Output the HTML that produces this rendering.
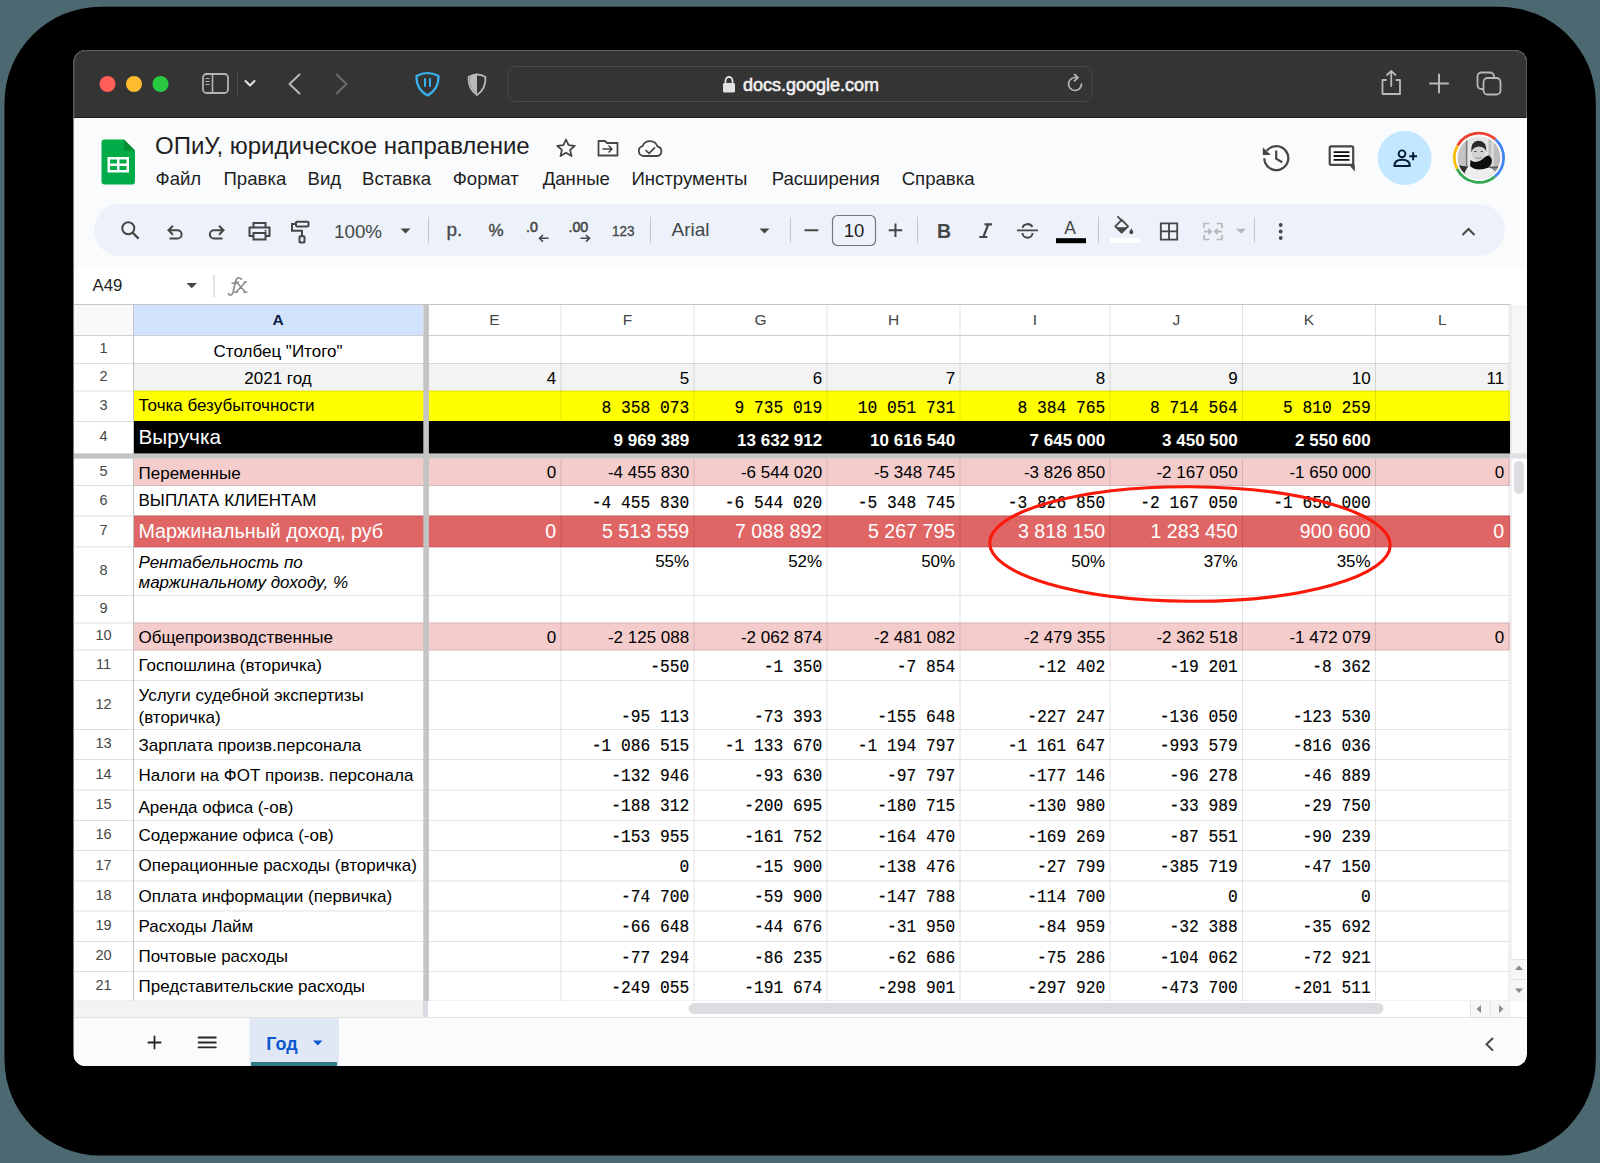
<!DOCTYPE html><html><head><meta charset="utf-8"><title>ОПиУ</title><style>html,body{margin:0;padding:0;background:#4c6871;width:1600px;height:1163px;overflow:hidden}text{white-space:pre}</style></head><body><svg width="1600" height="1163" viewBox="0 0 1600 1163" style="display:block"><defs><clipPath id="win"><rect x="73.5" y="50" width="1453.5" height="1016" rx="12" ry="12"/></clipPath><clipPath id="grid"><rect x="74" y="304" width="1452" height="713"/></clipPath><clipPath id="av"><circle cx="1479" cy="157.8" r="21.3"/></clipPath></defs><rect x="0" y="0" width="1600" height="1163" fill="#4c6871" /><rect x="4.5" y="6.8" width="1591.3" height="1148.7" rx="96" ry="96" fill="#000"/><g clip-path="url(#win)"><rect x="73" y="50" width="1455" height="1016" fill="#f9fbfd" /><rect x="73" y="50" width="1455" height="68" fill="#343434" /><path d="M74 118 V62 A11.5 11.5 0 0 1 85.5 50.5 H1515 A11.5 11.5 0 0 1 1526.5 62 V118" fill="none" stroke="#5e5e5e" stroke-width="1"/><rect x="74" y="117" width="1452" height="1" fill="#1a1a1a" /><circle cx="107.5" cy="84" r="8" fill="#ff5f57"/><circle cx="134" cy="84" r="8" fill="#febc2e"/><circle cx="160.5" cy="84" r="8" fill="#28c840"/><rect x="203" y="74" width="25" height="19" rx="3.5" fill="none" stroke="#b4b4b4" stroke-width="1.8"/><line x1="212.5" y1="74" x2="212.5" y2="93" stroke="#b4b4b4" stroke-width="1.6"/><g stroke="#b4b4b4" stroke-width="1.2"><line x1="205.5" y1="78.5" x2="209.5" y2="78.5"/><line x1="205.5" y1="81.5" x2="209.5" y2="81.5"/><line x1="205.5" y1="84.5" x2="209.5" y2="84.5"/></g><rect x="237" y="72" width="1" height="24" fill="#4c4c4c" /><path d="M245.5 81 L250 85.5 L254.5 81" fill="none" stroke="#e6e6e6" stroke-width="2" stroke-linecap="round" stroke-linejoin="round"/><path d="M299.5 74.5 L289.5 84 L299.5 93.5" fill="none" stroke="#b8b8b8" stroke-width="2" stroke-linecap="round" stroke-linejoin="round"/><path d="M336.5 74.5 L346.5 84 L336.5 93.5" fill="none" stroke="#6c6c6c" stroke-width="2" stroke-linecap="round" stroke-linejoin="round"/><path d="M416.5 76 Q427.5 70 438.5 76 Q439 89 427.5 95.5 Q416 89 416.5 76 Z" fill="none" stroke="#38b2ee" stroke-width="2.2" stroke-linejoin="round"/><g stroke="#38b2ee" stroke-width="2" stroke-linecap="round"><line x1="425" y1="79" x2="425" y2="86"/><line x1="430" y1="79" x2="430" y2="86"/></g><path d="M468.5 77 Q477 72 485.5 77 Q486 89 477 95 Q468 89 468.5 77 Z" fill="none" stroke="#b8b8b8" stroke-width="1.8" stroke-linejoin="round"/><path d="M477 73.5 Q470 76 469.5 78 Q469.5 89 477 94 Z" fill="#b8b8b8"/><rect x="508" y="66.5" width="584" height="35" rx="8" ry="8" fill="#343434" stroke="#4a4a4a" stroke-width="1"/><rect x="723" y="83" width="12" height="9.5" rx="1.5" fill="#e2e2e2"/><path d="M725.5 83.5 V80.5 A3.5 3.5 0 0 1 732.5 80.5 V83.5" fill="none" stroke="#e2e2e2" stroke-width="1.8"/><text x="743" y="91" font-size="18" fill="#f0f0f0" text-anchor="start" font-weight="400" font-style="normal" font-family="'Liberation Sans', sans-serif" stroke="#f0f0f0" stroke-width="0.6">docs.google.com</text><path d="M1081.5 84 A6.5 6.5 0 1 1 1076 77.6" fill="none" stroke="#b8b8b8" stroke-width="1.7" stroke-linecap="round"/><path d="M1074.5 74.5 L1078 77.6 L1074.5 80.8" fill="none" stroke="#b8b8b8" stroke-width="1.7" stroke-linecap="round" stroke-linejoin="round"/><path d="M1386 80 H1382.5 V94 H1400 V80 H1396.5" fill="none" stroke="#b8b8b8" stroke-width="1.8" stroke-linejoin="round" stroke-linecap="round"/><path d="M1391.25 86 V71 M1387 75 L1391.25 71 L1395.5 75" fill="none" stroke="#b8b8b8" stroke-width="1.8" stroke-linecap="round" stroke-linejoin="round"/><path d="M1439 74.5 V92.5 M1430 83.5 H1448" stroke="#b8b8b8" stroke-width="2" stroke-linecap="round"/><rect x="1477.5" y="72.5" width="16.5" height="16.5" rx="4" fill="none" stroke="#b8b8b8" stroke-width="1.8"/><rect x="1483.5" y="78" width="17" height="16.5" rx="4" fill="#343434" stroke="#b8b8b8" stroke-width="1.8"/><path d="M104.5 139.5 H124 L135 150.5 V181.5 A3 3 0 0 1 132.5 184.5 H104.5 A3 3 0 0 1 101.5 181.5 V142.5 A3 3 0 0 1 104.5 139.5 Z" fill="#00ac47"/><path d="M124 139.5 L135 150.5 H124 Z" fill="#089134"/><rect x="107.5" y="157" width="21.5" height="15.5" fill="#fff"/><rect x="110" y="159.5" width="7" height="4" fill="#00ac47"/><rect x="119.5" y="159.5" width="7" height="4" fill="#00ac47"/><rect x="110" y="166" width="7" height="4" fill="#00ac47"/><rect x="119.5" y="166" width="7" height="4" fill="#00ac47"/><text x="155" y="154" font-size="24" fill="#1f1f1f" text-anchor="start" font-weight="400" font-style="normal" font-family="'Liberation Sans', sans-serif" >ОПиУ, юридическое направление</text><path d="M566 139.5 L568.6 145.2 L574.8 145.8 L570.1 149.9 L571.5 156 L566 152.8 L560.5 156 L561.9 149.9 L557.2 145.8 L563.4 145.2 Z" fill="none" stroke="#444746" stroke-width="1.8" stroke-linejoin="round"/><path d="M598.5 141 H605 L607 143 H617.5 V155.5 H598.5 Z" fill="none" stroke="#444746" stroke-width="1.8" stroke-linejoin="round"/><path d="M603 149 H612 M609 146 L612 149 L609 152" fill="none" stroke="#444746" stroke-width="1.6" stroke-linecap="round" stroke-linejoin="round"/><path d="M643.5 156 A5 5 0 0 1 642.5 146.2 A8 8 0 0 1 657.5 146.5 A4.8 4.8 0 0 1 657 156 Z" fill="none" stroke="#444746" stroke-width="1.8" stroke-linejoin="round"/><path d="M646 150.5 L649 153.3 L654.5 147.8" fill="none" stroke="#444746" stroke-width="1.7" stroke-linecap="round" stroke-linejoin="round"/><text x="155.5" y="185" font-size="18.6" fill="#1f1f1f" text-anchor="start" font-weight="400" font-style="normal" font-family="'Liberation Sans', sans-serif" >Файл</text><text x="223.5" y="185" font-size="18.6" fill="#1f1f1f" text-anchor="start" font-weight="400" font-style="normal" font-family="'Liberation Sans', sans-serif" >Правка</text><text x="307.5" y="185" font-size="18.6" fill="#1f1f1f" text-anchor="start" font-weight="400" font-style="normal" font-family="'Liberation Sans', sans-serif" >Вид</text><text x="362" y="185" font-size="18.6" fill="#1f1f1f" text-anchor="start" font-weight="400" font-style="normal" font-family="'Liberation Sans', sans-serif" >Вставка</text><text x="452.7" y="185" font-size="18.6" fill="#1f1f1f" text-anchor="start" font-weight="400" font-style="normal" font-family="'Liberation Sans', sans-serif" >Формат</text><text x="542.7" y="185" font-size="18.6" fill="#1f1f1f" text-anchor="start" font-weight="400" font-style="normal" font-family="'Liberation Sans', sans-serif" >Данные</text><text x="631.4" y="185" font-size="18.6" fill="#1f1f1f" text-anchor="start" font-weight="400" font-style="normal" font-family="'Liberation Sans', sans-serif" >Инструменты</text><text x="771.7" y="185" font-size="18.6" fill="#1f1f1f" text-anchor="start" font-weight="400" font-style="normal" font-family="'Liberation Sans', sans-serif" >Расширения</text><text x="901.7" y="185" font-size="18.6" fill="#1f1f1f" text-anchor="start" font-weight="400" font-style="normal" font-family="'Liberation Sans', sans-serif" >Справка</text><path d="M1264.3 158.3 A12 12 0 1 0 1266.8 150.8" fill="none" stroke="#444746" stroke-width="2.3"/><path d="M1262.8 147.3 V155 H1270.8 Z" fill="#444746"/><path d="M1276.2 150.4 V158.6 L1282.2 162.2" fill="none" stroke="#444746" stroke-width="2.2"/><rect x="1329.7" y="146.3" width="23.5" height="18.5" rx="1.5" fill="none" stroke="#444746" stroke-width="2.2"/><path d="M1348.8 164.5 H1354.8 V171.5 Z" fill="#444746"/><path d="M1334.3 152.1 H1348.8 M1334.3 156 H1348.8 M1334.3 159.9 H1348.8" stroke="#111" stroke-width="1.8" stroke-linecap="round"/><circle cx="1404.6" cy="158" r="27" fill="#c2e7ff"/><circle cx="1402" cy="153.8" r="3.4" fill="none" stroke="#001d35" stroke-width="1.9"/><path d="M1394.4 166 Q1394.4 159.8 1402.1 159.8 Q1409.8 159.8 1409.8 166 Z" fill="none" stroke="#001d35" stroke-width="2" stroke-linejoin="round"/><path d="M1409.3 156.3 H1417 M1413.15 152.2 V160.2" stroke="#001d35" stroke-width="2"/><g fill="none" stroke-width="2.8"><path d="M1457.70 145.50 A24.6 24.6 0 0 1 1495.46 139.52" stroke="#ea4335"/><path d="M1495.46 139.52 A24.6 24.6 0 0 1 1494.81 176.64" stroke="#4285f4"/><path d="M1494.81 176.64 A24.6 24.6 0 0 1 1457.08 168.97" stroke="#34a853"/><path d="M1457.08 168.97 A24.6 24.6 0 0 1 1457.70 145.50" stroke="#fbbc05"/></g><circle cx="1479" cy="157.8" r="23" fill="#fafafa"/><g clip-path="url(#av)"><rect x="1457" y="136" width="44" height="44" fill="#e4e4e4"/><rect x="1457" y="136" width="9" height="44" fill="#c4c4c4"/><rect x="1465.8" y="136" width="1.6" height="30" fill="#7a7a7a"/><rect x="1488.5" y="136" width="12" height="32" fill="#bdbdbd"/><rect x="1491" y="136" width="3" height="32" fill="#d8d8d8"/><rect x="1457" y="166.5" width="44" height="2.2" fill="#5a5a5a"/><rect x="1488" y="168.7" width="13" height="12" fill="#8a8a8a"/><path d="M1457 165 L1469 167 L1470 175 L1457 174 Z" fill="#2e2e2e"/><ellipse cx="1478.3" cy="153.5" rx="6.6" ry="8.3" fill="#d2d2d2"/><path d="M1471.2 152.5 Q1470.5 141 1478.5 140.8 Q1487 141 1486.3 152 Q1485 146.8 1479 146.5 Q1473 146.6 1471.2 152.5 Z" fill="#2b2b2b"/><path d="M1474 151.5 h2.5 M1480.5 151.5 h2.5" stroke="#555" stroke-width="1"/><path d="M1475.5 157.5 Q1478.5 159.5 1481.5 157.5" fill="none" stroke="#777" stroke-width="0.9"/><path d="M1470.5 160 Q1477 165 1485 157 Q1487 155 1489 155.5 Q1493 158.5 1491.5 163.5 Q1488 170 1480 171.5 Q1472.5 171 1470 166 Z" fill="#0e0e0e"/><path d="M1463 181 Q1464 170 1469.5 165.5 Q1476 172.5 1489 167.5 Q1497 170 1498 181 Z" fill="#ededed"/></g><rect x="94" y="204" width="1411" height="52" rx="26" ry="26" fill="#edf2fa"/><circle cx="128.3" cy="228.3" r="6" fill="none" stroke="#444746" stroke-width="2"/><path d="M132.6 232.6 L138.6 238.6" stroke="#444746" stroke-width="2.2"/><path d="M169.5 238.5 H177.5 A4.1 4.1 0 0 0 177.5 230.3 H168.5 M173 225.8 L168.5 230.3 L173 234.8" fill="none" stroke="#444746" stroke-width="2"/><path d="M222.5 238.5 H214 A4.1 4.1 0 0 1 214 230.3 H223.5 M219 225.8 L223.5 230.3 L219 234.8" fill="none" stroke="#444746" stroke-width="2"/><path d="M253.5 227 V223 H265.5 V227" fill="none" stroke="#444746" stroke-width="2"/><path d="M253.5 236 H249.5 V227.5 H269.5 V236 H265.5" fill="none" stroke="#444746" stroke-width="2" stroke-linejoin="round"/><rect x="253.5" y="233" width="12" height="6.5" fill="none" stroke="#444746" stroke-width="2"/><circle cx="265.5" cy="230.8" r="1" fill="#444746"/><rect x="296" y="221.8" width="12.5" height="4.6" rx="0.8" fill="none" stroke="#444746" stroke-width="2"/><path d="M296 224 H292 V230.8 H302 V236" fill="none" stroke="#444746" stroke-width="2"/><rect x="299.5" y="236.3" width="5" height="6.2" rx="0.8" fill="none" stroke="#444746" stroke-width="2"/><text x="334" y="237.7" font-size="18.8" fill="#444746" text-anchor="start" font-weight="400" font-style="normal" font-family="'Liberation Sans', sans-serif" >100%</text><path d="M400.5 228.5 H410.5 L405.5 233.5 Z" fill="#444746"/><rect x="428" y="217" width="1" height="26" fill="#c7c7c7" /><text x="446.5" y="235.5" font-size="19" fill="#444746" text-anchor="start" font-weight="400" font-style="normal" font-family="'Liberation Sans', sans-serif" stroke="#444746" stroke-width="0.3">р.</text><text x="488.5" y="235.5" font-size="17" fill="#444746" text-anchor="start" font-weight="400" font-style="normal" font-family="'Liberation Sans', sans-serif" stroke="#444746" stroke-width="0.4">%</text><text x="526" y="232.3" font-size="14.2" fill="#444746" text-anchor="start" font-weight="400" font-style="normal" font-family="'Liberation Sans', sans-serif" stroke="#444746" stroke-width="0.55">.0</text><path d="M548.5 238.3 H539.5 M543 235 L539.5 238.3 L543 241.6" fill="none" stroke="#444746" stroke-width="1.6"/><text x="568.5" y="232.3" font-size="14.2" fill="#444746" text-anchor="start" font-weight="400" font-style="normal" font-family="'Liberation Sans', sans-serif" stroke="#444746" stroke-width="0.55">.00</text><path d="M580.5 238.3 H589.5 M586 235 L589.5 238.3 L586 241.6" fill="none" stroke="#444746" stroke-width="1.6"/><text x="612" y="235.5" font-size="15.2" fill="#444746" text-anchor="start" font-weight="400" font-style="normal" font-family="'Liberation Sans', sans-serif" textLength="22.5" lengthAdjust="spacingAndGlyphs" stroke="#444746" stroke-width="0.35">123</text><rect x="650" y="217" width="1" height="26" fill="#c7c7c7" /><text x="671.5" y="236.4" font-size="19" fill="#444746" text-anchor="start" font-weight="400" font-style="normal" font-family="'Liberation Sans', sans-serif" >Arial</text><path d="M759.5 228.5 H769.5 L764.5 233.5 Z" fill="#444746"/><rect x="790" y="217" width="1" height="26" fill="#c7c7c7" /><path d="M804.5 230.3 H818.3" stroke="#444746" stroke-width="2"/><rect x="832.5" y="215.5" width="43" height="30" rx="5" fill="none" stroke="#747775" stroke-width="1.2"/><text x="854" y="236.5" font-size="18.5" fill="#1f1f1f" text-anchor="middle" font-weight="400" font-style="normal" font-family="'Liberation Sans', sans-serif" >10</text><path d="M888.7 230.3 H902.2 M895.45 223.5 V237" stroke="#444746" stroke-width="2"/><rect x="917" y="217" width="1" height="26" fill="#c7c7c7" /><text x="937" y="238" font-size="19.5" fill="#444746" text-anchor="start" font-weight="700" font-style="normal" font-family="'Liberation Sans', sans-serif" >B</text><path d="M984.5 224.3 H992 M979.3 237 H987.3 M988.3 224.3 L983.3 237" fill="none" stroke="#444746" stroke-width="2.2"/><path d="M1017 230.3 H1038" stroke="#444746" stroke-width="1.8"/><path d="M1022.6 227.8 A5 4.2 0 0 1 1032.3 227" fill="none" stroke="#444746" stroke-width="2"/><path d="M1022.5 233 A5 4.8 0 0 0 1032.5 233" fill="none" stroke="#444746" stroke-width="2"/><text x="1070.2" y="234" font-size="17.5" fill="#444746" text-anchor="middle" font-weight="400" font-style="normal" font-family="'Liberation Sans', sans-serif" >A</text><rect x="1056" y="238.2" width="30" height="5" fill="#000" /><rect x="1098" y="217" width="1" height="26" fill="#c7c7c7" /><path d="M1118 216.8 L1122.3 221.1" stroke="#444746" stroke-width="1.8" stroke-linecap="round"/><path d="M1121.7 219.9 L1128.1 226.3 L1121.7 232.7 L1115.3 226.3 Z" fill="none" stroke="#444746" stroke-width="1.8" stroke-linejoin="round"/><path d="M1115.6 227.2 H1127.8 L1121.7 233 Z" fill="#444746"/><path d="M1131.3 228.3 L1129.5 231.4 A1.95 1.95 0 1 0 1133.1 231.4 Z" fill="#444746"/><rect x="1110" y="238" width="30" height="5" fill="#ffffff" /><path d="M1160.8 223.3 H1177.2 V239.6 H1160.8 Z M1169 223.3 V239.6 M1160.8 231.45 H1177.2" fill="none" stroke="#444746" stroke-width="1.8"/><path d="M1204 228 V223.5 H1209.5 M1204 235 V239.5 H1209.5 M1222 228 V223.5 H1216.5 M1222 235 V239.5 H1216.5" fill="none" stroke="#b8b9b9" stroke-width="1.7"/><path d="M1204 231.5 H1211 M1208.5 229 L1211 231.5 L1208.5 234 M1222 231.5 H1215 M1217.5 229 L1215 231.5 L1217.5 234" fill="none" stroke="#b8b9b9" stroke-width="1.8"/><path d="M1236 228.8 H1246 L1241 233.8 Z" fill="#b8b9b9"/><rect x="1254" y="217" width="1" height="26" fill="#c7c7c7" /><circle cx="1280.7" cy="225" r="1.9" fill="#444746"/><circle cx="1280.7" cy="231.5" r="1.9" fill="#444746"/><circle cx="1280.7" cy="238" r="1.9" fill="#444746"/><path d="M1462.5 235 L1468.5 229 L1474.5 235" fill="none" stroke="#444746" stroke-width="2"/><rect x="74" y="267" width="1452" height="37" fill="#ffffff" /><text x="92.5" y="290.5" font-size="16.8" fill="#1f1f1f" text-anchor="start" font-weight="400" font-style="normal" font-family="'Liberation Sans', sans-serif" >A49</text><path d="M186.5 283 H197 L191.75 288.3 Z" fill="#444746"/><rect x="213.5" y="275" width="1" height="22" fill="#c7c7c7" /><path d="M241.5 279.2 Q240 277.3 237.8 278 Q236 278.8 235.5 281.5 L233 292.5 Q232.3 295.2 230 295 Q228.8 294.8 228.5 293.5" fill="none" stroke="#8e8e8e" stroke-width="1.7" stroke-linecap="round"/><path d="M231.5 283.3 H238.8" stroke="#8e8e8e" stroke-width="1.6"/><path d="M236.5 282 L245.5 292.3 M245.5 282 L236 292.3 M234.5 282 H238.5 M243.5 282 H247 M234 292.3 H238 M243.5 292.3 H247.3" fill="none" stroke="#8e8e8e" stroke-width="1.6"/><g clip-path="url(#grid)"><rect x="74" y="304" width="1436" height="697.5" fill="#ffffff" /><rect x="133.5" y="363" width="1377" height="28.600000000000023" fill="#f3f3f3" /><rect x="133.5" y="390.6" width="1377" height="31.399999999999977" fill="#ffff00" /><rect x="133.5" y="421" width="1377" height="33" fill="#000000" /><rect x="133.5" y="458.6" width="1377" height="27.399999999999977" fill="#f4cccc" /><rect x="133.5" y="515.5" width="1377" height="31.799999999999955" fill="#e06666" /><rect x="133.5" y="622.5" width="1377" height="28.0" fill="#f4cccc" /><rect x="74" y="304" width="59.5" height="31.3" fill="#f8f9fa" /><rect x="133.5" y="304.5" width="289.5" height="30.8" fill="#d3e3fd" /><rect x="133.5" y="363" width="1375.5" height="1" fill="rgba(0,0,0,0.115)"/><rect x="74" y="363" width="59.5" height="1" fill="rgba(0,0,0,0.13)"/><rect x="133.5" y="390.6" width="1375.5" height="1" fill="rgba(0,0,0,0.115)"/><rect x="74" y="390.6" width="59.5" height="1" fill="rgba(0,0,0,0.13)"/><rect x="133.5" y="421" width="1375.5" height="1" fill="rgba(0,0,0,0.115)"/><rect x="74" y="421" width="59.5" height="1" fill="rgba(0,0,0,0.13)"/><rect x="133.5" y="485" width="1375.5" height="1" fill="rgba(0,0,0,0.115)"/><rect x="74" y="485" width="59.5" height="1" fill="rgba(0,0,0,0.13)"/><rect x="133.5" y="515.5" width="1375.5" height="1" fill="rgba(0,0,0,0.115)"/><rect x="74" y="515.5" width="59.5" height="1" fill="rgba(0,0,0,0.13)"/><rect x="133.5" y="546.3" width="1375.5" height="1" fill="rgba(0,0,0,0.115)"/><rect x="74" y="546.3" width="59.5" height="1" fill="rgba(0,0,0,0.13)"/><rect x="133.5" y="595" width="1375.5" height="1" fill="rgba(0,0,0,0.115)"/><rect x="74" y="595" width="59.5" height="1" fill="rgba(0,0,0,0.13)"/><rect x="133.5" y="622.5" width="1375.5" height="1" fill="rgba(0,0,0,0.115)"/><rect x="74" y="622.5" width="59.5" height="1" fill="rgba(0,0,0,0.13)"/><rect x="133.5" y="649.5" width="1375.5" height="1" fill="rgba(0,0,0,0.115)"/><rect x="74" y="649.5" width="59.5" height="1" fill="rgba(0,0,0,0.13)"/><rect x="133.5" y="680" width="1375.5" height="1" fill="rgba(0,0,0,0.115)"/><rect x="74" y="680" width="59.5" height="1" fill="rgba(0,0,0,0.13)"/><rect x="133.5" y="729" width="1375.5" height="1" fill="rgba(0,0,0,0.115)"/><rect x="74" y="729" width="59.5" height="1" fill="rgba(0,0,0,0.13)"/><rect x="133.5" y="759" width="1375.5" height="1" fill="rgba(0,0,0,0.115)"/><rect x="74" y="759" width="59.5" height="1" fill="rgba(0,0,0,0.13)"/><rect x="133.5" y="789.5" width="1375.5" height="1" fill="rgba(0,0,0,0.115)"/><rect x="74" y="789.5" width="59.5" height="1" fill="rgba(0,0,0,0.13)"/><rect x="133.5" y="820" width="1375.5" height="1" fill="rgba(0,0,0,0.115)"/><rect x="74" y="820" width="59.5" height="1" fill="rgba(0,0,0,0.13)"/><rect x="133.5" y="850" width="1375.5" height="1" fill="rgba(0,0,0,0.115)"/><rect x="74" y="850" width="59.5" height="1" fill="rgba(0,0,0,0.13)"/><rect x="133.5" y="880.5" width="1375.5" height="1" fill="rgba(0,0,0,0.115)"/><rect x="74" y="880.5" width="59.5" height="1" fill="rgba(0,0,0,0.13)"/><rect x="133.5" y="910.5" width="1375.5" height="1" fill="rgba(0,0,0,0.115)"/><rect x="74" y="910.5" width="59.5" height="1" fill="rgba(0,0,0,0.13)"/><rect x="133.5" y="941" width="1375.5" height="1" fill="rgba(0,0,0,0.115)"/><rect x="74" y="941" width="59.5" height="1" fill="rgba(0,0,0,0.13)"/><rect x="133.5" y="971" width="1375.5" height="1" fill="rgba(0,0,0,0.115)"/><rect x="74" y="971" width="59.5" height="1" fill="rgba(0,0,0,0.13)"/><rect x="133.5" y="1000.5" width="1375.5" height="1" fill="rgba(0,0,0,0.115)"/><rect x="74" y="1000.5" width="59.5" height="1" fill="rgba(0,0,0,0.13)"/><rect x="560.5" y="304" width="1" height="697.5" fill="rgba(0,0,0,0.115)"/><rect x="693.5" y="304" width="1" height="697.5" fill="rgba(0,0,0,0.115)"/><rect x="826.5" y="304" width="1" height="697.5" fill="rgba(0,0,0,0.115)"/><rect x="959.5" y="304" width="1" height="697.5" fill="rgba(0,0,0,0.115)"/><rect x="1109.5" y="304" width="1" height="697.5" fill="rgba(0,0,0,0.115)"/><rect x="1242.0" y="304" width="1" height="697.5" fill="rgba(0,0,0,0.115)"/><rect x="1375.0" y="304" width="1" height="697.5" fill="rgba(0,0,0,0.115)"/><rect x="1508.5" y="304" width="1" height="697.5" fill="rgba(0,0,0,0.115)"/><rect x="74" y="304" width="1452" height="1" fill="#c6c6c6" /><rect x="74" y="335" width="1436" height="1" fill="#cfcfcf" /><rect x="133" y="304" width="1" height="697.5" fill="#c4c4c4" /><rect x="423.3" y="304" width="5.6" height="697.5" fill="#c4c4c4" /><rect x="74" y="453.4" width="1436" height="5.2" fill="#c4c4c4" /><text x="278" y="325" font-size="15.5" fill="#0b1f44" text-anchor="middle" font-weight="700" font-style="normal" font-family="'Liberation Sans', sans-serif" >A</text><text x="494.5" y="325" font-size="15.5" fill="#444746" text-anchor="middle" font-weight="400" font-style="normal" font-family="'Liberation Sans', sans-serif" >E</text><text x="627.5" y="325" font-size="15.5" fill="#444746" text-anchor="middle" font-weight="400" font-style="normal" font-family="'Liberation Sans', sans-serif" >F</text><text x="760.5" y="325" font-size="15.5" fill="#444746" text-anchor="middle" font-weight="400" font-style="normal" font-family="'Liberation Sans', sans-serif" >G</text><text x="893.5" y="325" font-size="15.5" fill="#444746" text-anchor="middle" font-weight="400" font-style="normal" font-family="'Liberation Sans', sans-serif" >H</text><text x="1035.0" y="325" font-size="15.5" fill="#444746" text-anchor="middle" font-weight="400" font-style="normal" font-family="'Liberation Sans', sans-serif" >I</text><text x="1176.25" y="325" font-size="15.5" fill="#444746" text-anchor="middle" font-weight="400" font-style="normal" font-family="'Liberation Sans', sans-serif" >J</text><text x="1309.0" y="325" font-size="15.5" fill="#444746" text-anchor="middle" font-weight="400" font-style="normal" font-family="'Liberation Sans', sans-serif" >K</text><text x="1442.25" y="325" font-size="15.5" fill="#444746" text-anchor="middle" font-weight="400" font-style="normal" font-family="'Liberation Sans', sans-serif" >L</text><text x="103.5" y="353.3" font-size="14.5" fill="#444746" text-anchor="middle" font-weight="400" font-style="normal" font-family="'Liberation Sans', sans-serif" >1</text><text x="103.5" y="381.1" font-size="14.5" fill="#444746" text-anchor="middle" font-weight="400" font-style="normal" font-family="'Liberation Sans', sans-serif" >2</text><text x="103.5" y="410.1" font-size="14.5" fill="#444746" text-anchor="middle" font-weight="400" font-style="normal" font-family="'Liberation Sans', sans-serif" >3</text><text x="103.5" y="441.3" font-size="14.5" fill="#444746" text-anchor="middle" font-weight="400" font-style="normal" font-family="'Liberation Sans', sans-serif" >4</text><text x="103.5" y="476.1" font-size="14.5" fill="#444746" text-anchor="middle" font-weight="400" font-style="normal" font-family="'Liberation Sans', sans-serif" >5</text><text x="103.5" y="504.55" font-size="14.5" fill="#444746" text-anchor="middle" font-weight="400" font-style="normal" font-family="'Liberation Sans', sans-serif" >6</text><text x="103.5" y="535.1999999999999" font-size="14.5" fill="#444746" text-anchor="middle" font-weight="400" font-style="normal" font-family="'Liberation Sans', sans-serif" >7</text><text x="103.5" y="574.9499999999999" font-size="14.5" fill="#444746" text-anchor="middle" font-weight="400" font-style="normal" font-family="'Liberation Sans', sans-serif" >8</text><text x="103.5" y="613.05" font-size="14.5" fill="#444746" text-anchor="middle" font-weight="400" font-style="normal" font-family="'Liberation Sans', sans-serif" >9</text><text x="103.5" y="640.3" font-size="14.5" fill="#444746" text-anchor="middle" font-weight="400" font-style="normal" font-family="'Liberation Sans', sans-serif" >10</text><text x="103.5" y="669.05" font-size="14.5" fill="#444746" text-anchor="middle" font-weight="400" font-style="normal" font-family="'Liberation Sans', sans-serif" >11</text><text x="103.5" y="708.8" font-size="14.5" fill="#444746" text-anchor="middle" font-weight="400" font-style="normal" font-family="'Liberation Sans', sans-serif" >12</text><text x="103.5" y="748.3" font-size="14.5" fill="#444746" text-anchor="middle" font-weight="400" font-style="normal" font-family="'Liberation Sans', sans-serif" >13</text><text x="103.5" y="778.55" font-size="14.5" fill="#444746" text-anchor="middle" font-weight="400" font-style="normal" font-family="'Liberation Sans', sans-serif" >14</text><text x="103.5" y="809.05" font-size="14.5" fill="#444746" text-anchor="middle" font-weight="400" font-style="normal" font-family="'Liberation Sans', sans-serif" >15</text><text x="103.5" y="839.3" font-size="14.5" fill="#444746" text-anchor="middle" font-weight="400" font-style="normal" font-family="'Liberation Sans', sans-serif" >16</text><text x="103.5" y="869.55" font-size="14.5" fill="#444746" text-anchor="middle" font-weight="400" font-style="normal" font-family="'Liberation Sans', sans-serif" >17</text><text x="103.5" y="899.8" font-size="14.5" fill="#444746" text-anchor="middle" font-weight="400" font-style="normal" font-family="'Liberation Sans', sans-serif" >18</text><text x="103.5" y="930.05" font-size="14.5" fill="#444746" text-anchor="middle" font-weight="400" font-style="normal" font-family="'Liberation Sans', sans-serif" >19</text><text x="103.5" y="960.3" font-size="14.5" fill="#444746" text-anchor="middle" font-weight="400" font-style="normal" font-family="'Liberation Sans', sans-serif" >20</text><text x="103.5" y="990.05" font-size="14.5" fill="#444746" text-anchor="middle" font-weight="400" font-style="normal" font-family="'Liberation Sans', sans-serif" >21</text><text x="278" y="356.7" font-size="17" fill="#000" text-anchor="middle" font-weight="400" font-style="normal" font-family="'Liberation Sans', sans-serif" >Столбец "Итого"</text><text x="278" y="384.3" font-size="17" fill="#000" text-anchor="middle" font-weight="400" font-style="normal" font-family="'Liberation Sans', sans-serif" >2021 год</text><text x="138.5" y="411" font-size="17" fill="#000" text-anchor="start" font-weight="400" font-style="normal" font-family="'Liberation Sans', sans-serif" >Точка безубыточности</text><text x="138.5" y="444.2" font-size="20.8" fill="#fff" text-anchor="start" font-weight="400" font-style="normal" font-family="'Liberation Sans', sans-serif" >Выручка</text><text x="138.5" y="479" font-size="17" fill="#000" text-anchor="start" font-weight="400" font-style="normal" font-family="'Liberation Sans', sans-serif" >Переменные</text><text x="138.5" y="506.2" font-size="17" fill="#000" text-anchor="start" font-weight="400" font-style="normal" font-family="'Liberation Sans', sans-serif" >ВЫПЛАТА КЛИЕНТАМ</text><text x="138.5" y="537.6" font-size="19.7" fill="#fff" text-anchor="start" font-weight="400" font-style="normal" font-family="'Liberation Sans', sans-serif" >Маржинальный доход, руб</text><text x="138.5" y="567.5" font-size="17" fill="#000" text-anchor="start" font-weight="400" font-style="italic" font-family="'Liberation Sans', sans-serif" >Рентабельность по</text><text x="138.5" y="588.2" font-size="17" fill="#000" text-anchor="start" font-weight="400" font-style="italic" font-family="'Liberation Sans', sans-serif" >маржинальному доходу, %</text><text x="138.5" y="643" font-size="17" fill="#000" text-anchor="start" font-weight="400" font-style="normal" font-family="'Liberation Sans', sans-serif" >Общепроизводственные</text><text x="138.5" y="670.7" font-size="17" fill="#000" text-anchor="start" font-weight="400" font-style="normal" font-family="'Liberation Sans', sans-serif" >Госпошлина (вторичка)</text><text x="138.5" y="701.1" font-size="17" fill="#000" text-anchor="start" font-weight="400" font-style="normal" font-family="'Liberation Sans', sans-serif" >Услуги судебной экспертизы</text><text x="138.5" y="722.6" font-size="17" fill="#000" text-anchor="start" font-weight="400" font-style="normal" font-family="'Liberation Sans', sans-serif" >(вторичка)</text><text x="138.5" y="750.6" font-size="17" fill="#000" text-anchor="start" font-weight="400" font-style="normal" font-family="'Liberation Sans', sans-serif" >Зарплата произв.персонала</text><text x="138.5" y="780.6" font-size="17" fill="#000" text-anchor="start" font-weight="400" font-style="normal" font-family="'Liberation Sans', sans-serif" >Налоги на ФОТ произв. персонала</text><text x="138.5" y="813.4" font-size="17" fill="#000" text-anchor="start" font-weight="400" font-style="normal" font-family="'Liberation Sans', sans-serif" >Аренда офиса (-ов)</text><text x="138.5" y="841.1" font-size="17" fill="#000" text-anchor="start" font-weight="400" font-style="normal" font-family="'Liberation Sans', sans-serif" >Содержание офиса (-ов)</text><text x="138.5" y="871.1" font-size="17" fill="#000" text-anchor="start" font-weight="400" font-style="normal" font-family="'Liberation Sans', sans-serif" >Операционные расходы (вторичка)</text><text x="138.5" y="901.6" font-size="17" fill="#000" text-anchor="start" font-weight="400" font-style="normal" font-family="'Liberation Sans', sans-serif" >Оплата информации (первичка)</text><text x="138.5" y="931.6" font-size="17" fill="#000" text-anchor="start" font-weight="400" font-style="normal" font-family="'Liberation Sans', sans-serif" >Расходы Лайм</text><text x="138.5" y="962.1" font-size="17" fill="#000" text-anchor="start" font-weight="400" font-style="normal" font-family="'Liberation Sans', sans-serif" >Почтовые расходы</text><text x="138.5" y="992.1" font-size="17" fill="#000" text-anchor="start" font-weight="400" font-style="normal" font-family="'Liberation Sans', sans-serif" >Представительские расходы</text><text x="556.2" y="384" font-size="17" fill="#000" text-anchor="end" font-weight="400" font-style="normal" font-family="'Liberation Sans', sans-serif" >4</text><text x="689.2" y="384" font-size="17" fill="#000" text-anchor="end" font-weight="400" font-style="normal" font-family="'Liberation Sans', sans-serif" >5</text><text x="822.2" y="384" font-size="17" fill="#000" text-anchor="end" font-weight="400" font-style="normal" font-family="'Liberation Sans', sans-serif" >6</text><text x="955.2" y="384" font-size="17" fill="#000" text-anchor="end" font-weight="400" font-style="normal" font-family="'Liberation Sans', sans-serif" >7</text><text x="1105.2" y="384" font-size="17" fill="#000" text-anchor="end" font-weight="400" font-style="normal" font-family="'Liberation Sans', sans-serif" >8</text><text x="1237.7" y="384" font-size="17" fill="#000" text-anchor="end" font-weight="400" font-style="normal" font-family="'Liberation Sans', sans-serif" >9</text><text x="1370.7" y="384" font-size="17" fill="#000" text-anchor="end" font-weight="400" font-style="normal" font-family="'Liberation Sans', sans-serif" >10</text><text x="1504.2" y="384" font-size="17" fill="#000" text-anchor="end" font-weight="400" font-style="normal" font-family="'Liberation Sans', sans-serif" >11</text><text x="689.2" y="412.8" font-size="18.4" fill="#000" stroke="#000" stroke-width="0.15" text-anchor="end" font-family="'Liberation Mono', monospace" textLength="87.66" lengthAdjust="spacingAndGlyphs">8 358 073</text><text x="822.2" y="412.8" font-size="18.4" fill="#000" stroke="#000" stroke-width="0.15" text-anchor="end" font-family="'Liberation Mono', monospace" textLength="87.66" lengthAdjust="spacingAndGlyphs">9 735 019</text><text x="955.2" y="412.8" font-size="18.4" fill="#000" stroke="#000" stroke-width="0.15" text-anchor="end" font-family="'Liberation Mono', monospace" textLength="97.40" lengthAdjust="spacingAndGlyphs">10 051 731</text><text x="1105.2" y="412.8" font-size="18.4" fill="#000" stroke="#000" stroke-width="0.15" text-anchor="end" font-family="'Liberation Mono', monospace" textLength="87.66" lengthAdjust="spacingAndGlyphs">8 384 765</text><text x="1237.7" y="412.8" font-size="18.4" fill="#000" stroke="#000" stroke-width="0.15" text-anchor="end" font-family="'Liberation Mono', monospace" textLength="87.66" lengthAdjust="spacingAndGlyphs">8 714 564</text><text x="1370.7" y="412.8" font-size="18.4" fill="#000" stroke="#000" stroke-width="0.15" text-anchor="end" font-family="'Liberation Mono', monospace" textLength="87.66" lengthAdjust="spacingAndGlyphs">5 810 259</text><text x="689.2" y="445.9" font-size="17" fill="#fff" text-anchor="end" font-weight="700" font-style="normal" font-family="'Liberation Sans', sans-serif" >9 969 389</text><text x="822.2" y="445.9" font-size="17" fill="#fff" text-anchor="end" font-weight="700" font-style="normal" font-family="'Liberation Sans', sans-serif" >13 632 912</text><text x="955.2" y="445.9" font-size="17" fill="#fff" text-anchor="end" font-weight="700" font-style="normal" font-family="'Liberation Sans', sans-serif" >10 616 540</text><text x="1105.2" y="445.9" font-size="17" fill="#fff" text-anchor="end" font-weight="700" font-style="normal" font-family="'Liberation Sans', sans-serif" >7 645 000</text><text x="1237.7" y="445.9" font-size="17" fill="#fff" text-anchor="end" font-weight="700" font-style="normal" font-family="'Liberation Sans', sans-serif" >3 450 500</text><text x="1370.7" y="445.9" font-size="17" fill="#fff" text-anchor="end" font-weight="700" font-style="normal" font-family="'Liberation Sans', sans-serif" >2 550 600</text><text x="556.2" y="478.4" font-size="17" fill="#000" text-anchor="end" font-weight="400" font-style="normal" font-family="'Liberation Sans', sans-serif" >0</text><text x="689.2" y="478.4" font-size="17" fill="#000" text-anchor="end" font-weight="400" font-style="normal" font-family="'Liberation Sans', sans-serif" >-4 455 830</text><text x="822.2" y="478.4" font-size="17" fill="#000" text-anchor="end" font-weight="400" font-style="normal" font-family="'Liberation Sans', sans-serif" >-6 544 020</text><text x="955.2" y="478.4" font-size="17" fill="#000" text-anchor="end" font-weight="400" font-style="normal" font-family="'Liberation Sans', sans-serif" >-5 348 745</text><text x="1105.2" y="478.4" font-size="17" fill="#000" text-anchor="end" font-weight="400" font-style="normal" font-family="'Liberation Sans', sans-serif" >-3 826 850</text><text x="1237.7" y="478.4" font-size="17" fill="#000" text-anchor="end" font-weight="400" font-style="normal" font-family="'Liberation Sans', sans-serif" >-2 167 050</text><text x="1370.7" y="478.4" font-size="17" fill="#000" text-anchor="end" font-weight="400" font-style="normal" font-family="'Liberation Sans', sans-serif" >-1 650 000</text><text x="1504.2" y="478.4" font-size="17" fill="#000" text-anchor="end" font-weight="400" font-style="normal" font-family="'Liberation Sans', sans-serif" >0</text><text x="689.2" y="507.5" font-size="18.4" fill="#000" stroke="#000" stroke-width="0.15" text-anchor="end" font-family="'Liberation Mono', monospace" textLength="97.40" lengthAdjust="spacingAndGlyphs">-4 455 830</text><text x="822.2" y="507.5" font-size="18.4" fill="#000" stroke="#000" stroke-width="0.15" text-anchor="end" font-family="'Liberation Mono', monospace" textLength="97.40" lengthAdjust="spacingAndGlyphs">-6 544 020</text><text x="955.2" y="507.5" font-size="18.4" fill="#000" stroke="#000" stroke-width="0.15" text-anchor="end" font-family="'Liberation Mono', monospace" textLength="97.40" lengthAdjust="spacingAndGlyphs">-5 348 745</text><text x="1105.2" y="507.5" font-size="18.4" fill="#000" stroke="#000" stroke-width="0.15" text-anchor="end" font-family="'Liberation Mono', monospace" textLength="97.40" lengthAdjust="spacingAndGlyphs">-3 826 850</text><text x="1237.7" y="507.5" font-size="18.4" fill="#000" stroke="#000" stroke-width="0.15" text-anchor="end" font-family="'Liberation Mono', monospace" textLength="97.40" lengthAdjust="spacingAndGlyphs">-2 167 050</text><text x="1370.7" y="507.5" font-size="18.4" fill="#000" stroke="#000" stroke-width="0.15" text-anchor="end" font-family="'Liberation Mono', monospace" textLength="97.40" lengthAdjust="spacingAndGlyphs">-1 650 000</text><text x="556.2" y="537.6" font-size="19.6" fill="#fff" text-anchor="end" font-weight="400" font-style="normal" font-family="'Liberation Sans', sans-serif" >0</text><text x="689.2" y="537.6" font-size="19.6" fill="#fff" text-anchor="end" font-weight="400" font-style="normal" font-family="'Liberation Sans', sans-serif" >5 513 559</text><text x="822.2" y="537.6" font-size="19.6" fill="#fff" text-anchor="end" font-weight="400" font-style="normal" font-family="'Liberation Sans', sans-serif" >7 088 892</text><text x="955.2" y="537.6" font-size="19.6" fill="#fff" text-anchor="end" font-weight="400" font-style="normal" font-family="'Liberation Sans', sans-serif" >5 267 795</text><text x="1105.2" y="537.6" font-size="19.6" fill="#fff" text-anchor="end" font-weight="400" font-style="normal" font-family="'Liberation Sans', sans-serif" >3 818 150</text><text x="1237.7" y="537.6" font-size="19.6" fill="#fff" text-anchor="end" font-weight="400" font-style="normal" font-family="'Liberation Sans', sans-serif" >1 283 450</text><text x="1370.7" y="537.6" font-size="19.6" fill="#fff" text-anchor="end" font-weight="400" font-style="normal" font-family="'Liberation Sans', sans-serif" >900 600</text><text x="1504.2" y="537.6" font-size="19.6" fill="#fff" text-anchor="end" font-weight="400" font-style="normal" font-family="'Liberation Sans', sans-serif" >0</text><text x="689.2" y="567.3" font-size="17" fill="#000" text-anchor="end" font-weight="400" font-style="normal" font-family="'Liberation Sans', sans-serif" >55%</text><text x="822.2" y="567.3" font-size="17" fill="#000" text-anchor="end" font-weight="400" font-style="normal" font-family="'Liberation Sans', sans-serif" >52%</text><text x="955.2" y="567.3" font-size="17" fill="#000" text-anchor="end" font-weight="400" font-style="normal" font-family="'Liberation Sans', sans-serif" >50%</text><text x="1105.2" y="567.3" font-size="17" fill="#000" text-anchor="end" font-weight="400" font-style="normal" font-family="'Liberation Sans', sans-serif" >50%</text><text x="1237.7" y="567.3" font-size="17" fill="#000" text-anchor="end" font-weight="400" font-style="normal" font-family="'Liberation Sans', sans-serif" >37%</text><text x="1370.7" y="567.3" font-size="17" fill="#000" text-anchor="end" font-weight="400" font-style="normal" font-family="'Liberation Sans', sans-serif" >35%</text><text x="556.2" y="643" font-size="17" fill="#000" text-anchor="end" font-weight="400" font-style="normal" font-family="'Liberation Sans', sans-serif" >0</text><text x="689.2" y="643" font-size="17" fill="#000" text-anchor="end" font-weight="400" font-style="normal" font-family="'Liberation Sans', sans-serif" >-2 125 088</text><text x="822.2" y="643" font-size="17" fill="#000" text-anchor="end" font-weight="400" font-style="normal" font-family="'Liberation Sans', sans-serif" >-2 062 874</text><text x="955.2" y="643" font-size="17" fill="#000" text-anchor="end" font-weight="400" font-style="normal" font-family="'Liberation Sans', sans-serif" >-2 481 082</text><text x="1105.2" y="643" font-size="17" fill="#000" text-anchor="end" font-weight="400" font-style="normal" font-family="'Liberation Sans', sans-serif" >-2 479 355</text><text x="1237.7" y="643" font-size="17" fill="#000" text-anchor="end" font-weight="400" font-style="normal" font-family="'Liberation Sans', sans-serif" >-2 362 518</text><text x="1370.7" y="643" font-size="17" fill="#000" text-anchor="end" font-weight="400" font-style="normal" font-family="'Liberation Sans', sans-serif" >-1 472 079</text><text x="1504.2" y="643" font-size="17" fill="#000" text-anchor="end" font-weight="400" font-style="normal" font-family="'Liberation Sans', sans-serif" >0</text><text x="689.2" y="672.2" font-size="18.4" fill="#000" stroke="#000" stroke-width="0.15" text-anchor="end" font-family="'Liberation Mono', monospace" textLength="38.96" lengthAdjust="spacingAndGlyphs">-550</text><text x="822.2" y="672.2" font-size="18.4" fill="#000" stroke="#000" stroke-width="0.15" text-anchor="end" font-family="'Liberation Mono', monospace" textLength="58.44" lengthAdjust="spacingAndGlyphs">-1 350</text><text x="955.2" y="672.2" font-size="18.4" fill="#000" stroke="#000" stroke-width="0.15" text-anchor="end" font-family="'Liberation Mono', monospace" textLength="58.44" lengthAdjust="spacingAndGlyphs">-7 854</text><text x="1105.2" y="672.2" font-size="18.4" fill="#000" stroke="#000" stroke-width="0.15" text-anchor="end" font-family="'Liberation Mono', monospace" textLength="68.18" lengthAdjust="spacingAndGlyphs">-12 402</text><text x="1237.7" y="672.2" font-size="18.4" fill="#000" stroke="#000" stroke-width="0.15" text-anchor="end" font-family="'Liberation Mono', monospace" textLength="68.18" lengthAdjust="spacingAndGlyphs">-19 201</text><text x="1370.7" y="672.2" font-size="18.4" fill="#000" stroke="#000" stroke-width="0.15" text-anchor="end" font-family="'Liberation Mono', monospace" textLength="58.44" lengthAdjust="spacingAndGlyphs">-8 362</text><text x="689.2" y="721.5" font-size="18.4" fill="#000" stroke="#000" stroke-width="0.15" text-anchor="end" font-family="'Liberation Mono', monospace" textLength="68.18" lengthAdjust="spacingAndGlyphs">-95 113</text><text x="822.2" y="721.5" font-size="18.4" fill="#000" stroke="#000" stroke-width="0.15" text-anchor="end" font-family="'Liberation Mono', monospace" textLength="68.18" lengthAdjust="spacingAndGlyphs">-73 393</text><text x="955.2" y="721.5" font-size="18.4" fill="#000" stroke="#000" stroke-width="0.15" text-anchor="end" font-family="'Liberation Mono', monospace" textLength="77.92" lengthAdjust="spacingAndGlyphs">-155 648</text><text x="1105.2" y="721.5" font-size="18.4" fill="#000" stroke="#000" stroke-width="0.15" text-anchor="end" font-family="'Liberation Mono', monospace" textLength="77.92" lengthAdjust="spacingAndGlyphs">-227 247</text><text x="1237.7" y="721.5" font-size="18.4" fill="#000" stroke="#000" stroke-width="0.15" text-anchor="end" font-family="'Liberation Mono', monospace" textLength="77.92" lengthAdjust="spacingAndGlyphs">-136 050</text><text x="1370.7" y="721.5" font-size="18.4" fill="#000" stroke="#000" stroke-width="0.15" text-anchor="end" font-family="'Liberation Mono', monospace" textLength="77.92" lengthAdjust="spacingAndGlyphs">-123 530</text><text x="689.2" y="750.6" font-size="18.4" fill="#000" stroke="#000" stroke-width="0.15" text-anchor="end" font-family="'Liberation Mono', monospace" textLength="97.40" lengthAdjust="spacingAndGlyphs">-1 086 515</text><text x="822.2" y="750.6" font-size="18.4" fill="#000" stroke="#000" stroke-width="0.15" text-anchor="end" font-family="'Liberation Mono', monospace" textLength="97.40" lengthAdjust="spacingAndGlyphs">-1 133 670</text><text x="955.2" y="750.6" font-size="18.4" fill="#000" stroke="#000" stroke-width="0.15" text-anchor="end" font-family="'Liberation Mono', monospace" textLength="97.40" lengthAdjust="spacingAndGlyphs">-1 194 797</text><text x="1105.2" y="750.6" font-size="18.4" fill="#000" stroke="#000" stroke-width="0.15" text-anchor="end" font-family="'Liberation Mono', monospace" textLength="97.40" lengthAdjust="spacingAndGlyphs">-1 161 647</text><text x="1237.7" y="750.6" font-size="18.4" fill="#000" stroke="#000" stroke-width="0.15" text-anchor="end" font-family="'Liberation Mono', monospace" textLength="77.92" lengthAdjust="spacingAndGlyphs">-993 579</text><text x="1370.7" y="750.6" font-size="18.4" fill="#000" stroke="#000" stroke-width="0.15" text-anchor="end" font-family="'Liberation Mono', monospace" textLength="77.92" lengthAdjust="spacingAndGlyphs">-816 036</text><text x="689.2" y="780.6" font-size="18.4" fill="#000" stroke="#000" stroke-width="0.15" text-anchor="end" font-family="'Liberation Mono', monospace" textLength="77.92" lengthAdjust="spacingAndGlyphs">-132 946</text><text x="822.2" y="780.6" font-size="18.4" fill="#000" stroke="#000" stroke-width="0.15" text-anchor="end" font-family="'Liberation Mono', monospace" textLength="68.18" lengthAdjust="spacingAndGlyphs">-93 630</text><text x="955.2" y="780.6" font-size="18.4" fill="#000" stroke="#000" stroke-width="0.15" text-anchor="end" font-family="'Liberation Mono', monospace" textLength="68.18" lengthAdjust="spacingAndGlyphs">-97 797</text><text x="1105.2" y="780.6" font-size="18.4" fill="#000" stroke="#000" stroke-width="0.15" text-anchor="end" font-family="'Liberation Mono', monospace" textLength="77.92" lengthAdjust="spacingAndGlyphs">-177 146</text><text x="1237.7" y="780.6" font-size="18.4" fill="#000" stroke="#000" stroke-width="0.15" text-anchor="end" font-family="'Liberation Mono', monospace" textLength="68.18" lengthAdjust="spacingAndGlyphs">-96 278</text><text x="1370.7" y="780.6" font-size="18.4" fill="#000" stroke="#000" stroke-width="0.15" text-anchor="end" font-family="'Liberation Mono', monospace" textLength="68.18" lengthAdjust="spacingAndGlyphs">-46 889</text><text x="689.2" y="811.1" font-size="18.4" fill="#000" stroke="#000" stroke-width="0.15" text-anchor="end" font-family="'Liberation Mono', monospace" textLength="77.92" lengthAdjust="spacingAndGlyphs">-188 312</text><text x="822.2" y="811.1" font-size="18.4" fill="#000" stroke="#000" stroke-width="0.15" text-anchor="end" font-family="'Liberation Mono', monospace" textLength="77.92" lengthAdjust="spacingAndGlyphs">-200 695</text><text x="955.2" y="811.1" font-size="18.4" fill="#000" stroke="#000" stroke-width="0.15" text-anchor="end" font-family="'Liberation Mono', monospace" textLength="77.92" lengthAdjust="spacingAndGlyphs">-180 715</text><text x="1105.2" y="811.1" font-size="18.4" fill="#000" stroke="#000" stroke-width="0.15" text-anchor="end" font-family="'Liberation Mono', monospace" textLength="77.92" lengthAdjust="spacingAndGlyphs">-130 980</text><text x="1237.7" y="811.1" font-size="18.4" fill="#000" stroke="#000" stroke-width="0.15" text-anchor="end" font-family="'Liberation Mono', monospace" textLength="68.18" lengthAdjust="spacingAndGlyphs">-33 989</text><text x="1370.7" y="811.1" font-size="18.4" fill="#000" stroke="#000" stroke-width="0.15" text-anchor="end" font-family="'Liberation Mono', monospace" textLength="68.18" lengthAdjust="spacingAndGlyphs">-29 750</text><text x="689.2" y="841.6" font-size="18.4" fill="#000" stroke="#000" stroke-width="0.15" text-anchor="end" font-family="'Liberation Mono', monospace" textLength="77.92" lengthAdjust="spacingAndGlyphs">-153 955</text><text x="822.2" y="841.6" font-size="18.4" fill="#000" stroke="#000" stroke-width="0.15" text-anchor="end" font-family="'Liberation Mono', monospace" textLength="77.92" lengthAdjust="spacingAndGlyphs">-161 752</text><text x="955.2" y="841.6" font-size="18.4" fill="#000" stroke="#000" stroke-width="0.15" text-anchor="end" font-family="'Liberation Mono', monospace" textLength="77.92" lengthAdjust="spacingAndGlyphs">-164 470</text><text x="1105.2" y="841.6" font-size="18.4" fill="#000" stroke="#000" stroke-width="0.15" text-anchor="end" font-family="'Liberation Mono', monospace" textLength="77.92" lengthAdjust="spacingAndGlyphs">-169 269</text><text x="1237.7" y="841.6" font-size="18.4" fill="#000" stroke="#000" stroke-width="0.15" text-anchor="end" font-family="'Liberation Mono', monospace" textLength="68.18" lengthAdjust="spacingAndGlyphs">-87 551</text><text x="1370.7" y="841.6" font-size="18.4" fill="#000" stroke="#000" stroke-width="0.15" text-anchor="end" font-family="'Liberation Mono', monospace" textLength="68.18" lengthAdjust="spacingAndGlyphs">-90 239</text><text x="689.2" y="871.6" font-size="18.4" fill="#000" stroke="#000" stroke-width="0.15" text-anchor="end" font-family="'Liberation Mono', monospace" textLength="9.74" lengthAdjust="spacingAndGlyphs">0</text><text x="822.2" y="871.6" font-size="18.4" fill="#000" stroke="#000" stroke-width="0.15" text-anchor="end" font-family="'Liberation Mono', monospace" textLength="68.18" lengthAdjust="spacingAndGlyphs">-15 900</text><text x="955.2" y="871.6" font-size="18.4" fill="#000" stroke="#000" stroke-width="0.15" text-anchor="end" font-family="'Liberation Mono', monospace" textLength="77.92" lengthAdjust="spacingAndGlyphs">-138 476</text><text x="1105.2" y="871.6" font-size="18.4" fill="#000" stroke="#000" stroke-width="0.15" text-anchor="end" font-family="'Liberation Mono', monospace" textLength="68.18" lengthAdjust="spacingAndGlyphs">-27 799</text><text x="1237.7" y="871.6" font-size="18.4" fill="#000" stroke="#000" stroke-width="0.15" text-anchor="end" font-family="'Liberation Mono', monospace" textLength="77.92" lengthAdjust="spacingAndGlyphs">-385 719</text><text x="1370.7" y="871.6" font-size="18.4" fill="#000" stroke="#000" stroke-width="0.15" text-anchor="end" font-family="'Liberation Mono', monospace" textLength="68.18" lengthAdjust="spacingAndGlyphs">-47 150</text><text x="689.2" y="902.1" font-size="18.4" fill="#000" stroke="#000" stroke-width="0.15" text-anchor="end" font-family="'Liberation Mono', monospace" textLength="68.18" lengthAdjust="spacingAndGlyphs">-74 700</text><text x="822.2" y="902.1" font-size="18.4" fill="#000" stroke="#000" stroke-width="0.15" text-anchor="end" font-family="'Liberation Mono', monospace" textLength="68.18" lengthAdjust="spacingAndGlyphs">-59 900</text><text x="955.2" y="902.1" font-size="18.4" fill="#000" stroke="#000" stroke-width="0.15" text-anchor="end" font-family="'Liberation Mono', monospace" textLength="77.92" lengthAdjust="spacingAndGlyphs">-147 788</text><text x="1105.2" y="902.1" font-size="18.4" fill="#000" stroke="#000" stroke-width="0.15" text-anchor="end" font-family="'Liberation Mono', monospace" textLength="77.92" lengthAdjust="spacingAndGlyphs">-114 700</text><text x="1237.7" y="902.1" font-size="18.4" fill="#000" stroke="#000" stroke-width="0.15" text-anchor="end" font-family="'Liberation Mono', monospace" textLength="9.74" lengthAdjust="spacingAndGlyphs">0</text><text x="1370.7" y="902.1" font-size="18.4" fill="#000" stroke="#000" stroke-width="0.15" text-anchor="end" font-family="'Liberation Mono', monospace" textLength="9.74" lengthAdjust="spacingAndGlyphs">0</text><text x="689.2" y="932.1" font-size="18.4" fill="#000" stroke="#000" stroke-width="0.15" text-anchor="end" font-family="'Liberation Mono', monospace" textLength="68.18" lengthAdjust="spacingAndGlyphs">-66 648</text><text x="822.2" y="932.1" font-size="18.4" fill="#000" stroke="#000" stroke-width="0.15" text-anchor="end" font-family="'Liberation Mono', monospace" textLength="68.18" lengthAdjust="spacingAndGlyphs">-44 676</text><text x="955.2" y="932.1" font-size="18.4" fill="#000" stroke="#000" stroke-width="0.15" text-anchor="end" font-family="'Liberation Mono', monospace" textLength="68.18" lengthAdjust="spacingAndGlyphs">-31 950</text><text x="1105.2" y="932.1" font-size="18.4" fill="#000" stroke="#000" stroke-width="0.15" text-anchor="end" font-family="'Liberation Mono', monospace" textLength="68.18" lengthAdjust="spacingAndGlyphs">-84 959</text><text x="1237.7" y="932.1" font-size="18.4" fill="#000" stroke="#000" stroke-width="0.15" text-anchor="end" font-family="'Liberation Mono', monospace" textLength="68.18" lengthAdjust="spacingAndGlyphs">-32 388</text><text x="1370.7" y="932.1" font-size="18.4" fill="#000" stroke="#000" stroke-width="0.15" text-anchor="end" font-family="'Liberation Mono', monospace" textLength="68.18" lengthAdjust="spacingAndGlyphs">-35 692</text><text x="689.2" y="962.6" font-size="18.4" fill="#000" stroke="#000" stroke-width="0.15" text-anchor="end" font-family="'Liberation Mono', monospace" textLength="68.18" lengthAdjust="spacingAndGlyphs">-77 294</text><text x="822.2" y="962.6" font-size="18.4" fill="#000" stroke="#000" stroke-width="0.15" text-anchor="end" font-family="'Liberation Mono', monospace" textLength="68.18" lengthAdjust="spacingAndGlyphs">-86 235</text><text x="955.2" y="962.6" font-size="18.4" fill="#000" stroke="#000" stroke-width="0.15" text-anchor="end" font-family="'Liberation Mono', monospace" textLength="68.18" lengthAdjust="spacingAndGlyphs">-62 686</text><text x="1105.2" y="962.6" font-size="18.4" fill="#000" stroke="#000" stroke-width="0.15" text-anchor="end" font-family="'Liberation Mono', monospace" textLength="68.18" lengthAdjust="spacingAndGlyphs">-75 286</text><text x="1237.7" y="962.6" font-size="18.4" fill="#000" stroke="#000" stroke-width="0.15" text-anchor="end" font-family="'Liberation Mono', monospace" textLength="77.92" lengthAdjust="spacingAndGlyphs">-104 062</text><text x="1370.7" y="962.6" font-size="18.4" fill="#000" stroke="#000" stroke-width="0.15" text-anchor="end" font-family="'Liberation Mono', monospace" textLength="68.18" lengthAdjust="spacingAndGlyphs">-72 921</text><text x="689.2" y="992.6" font-size="18.4" fill="#000" stroke="#000" stroke-width="0.15" text-anchor="end" font-family="'Liberation Mono', monospace" textLength="77.92" lengthAdjust="spacingAndGlyphs">-249 055</text><text x="822.2" y="992.6" font-size="18.4" fill="#000" stroke="#000" stroke-width="0.15" text-anchor="end" font-family="'Liberation Mono', monospace" textLength="77.92" lengthAdjust="spacingAndGlyphs">-191 674</text><text x="955.2" y="992.6" font-size="18.4" fill="#000" stroke="#000" stroke-width="0.15" text-anchor="end" font-family="'Liberation Mono', monospace" textLength="77.92" lengthAdjust="spacingAndGlyphs">-298 901</text><text x="1105.2" y="992.6" font-size="18.4" fill="#000" stroke="#000" stroke-width="0.15" text-anchor="end" font-family="'Liberation Mono', monospace" textLength="77.92" lengthAdjust="spacingAndGlyphs">-297 920</text><text x="1237.7" y="992.6" font-size="18.4" fill="#000" stroke="#000" stroke-width="0.15" text-anchor="end" font-family="'Liberation Mono', monospace" textLength="77.92" lengthAdjust="spacingAndGlyphs">-473 700</text><text x="1370.7" y="992.6" font-size="18.4" fill="#000" stroke="#000" stroke-width="0.15" text-anchor="end" font-family="'Liberation Mono', monospace" textLength="77.92" lengthAdjust="spacingAndGlyphs">-201 511</text></g><rect x="1510.5" y="304" width="17" height="713" fill="#ffffff" /><rect x="1510.5" y="305" width="17" height="148.4" fill="#f6f6f6" /><rect x="1510.5" y="453.4" width="17" height="5.2" fill="#dde0e5" /><rect x="1510.5" y="304" width="1" height="713" fill="#e3e3e3" /><rect x="1514" y="461" width="10" height="33" rx="5" fill="#dadce0"/><rect x="1511" y="959" width="15" height="42" fill="#f6f6f6" /><rect x="1511" y="979" width="15" height="1" fill="#e3e3e3" /><rect x="1511" y="959" width="15" height="1" fill="#e3e3e3" /><path d="M1515 970 H1523 L1519 965.5 Z" fill="#8a8a8a"/><path d="M1515 988.5 H1523 L1519 993 Z" fill="#8a8a8a"/><rect x="74" y="1001" width="1452" height="16" fill="#ffffff" /><rect x="74" y="1001" width="354" height="16" fill="#f3f3f3" /><rect x="423" y="1001" width="5" height="16" fill="#d8dbe0" /><rect x="688.5" y="1003" width="695" height="11" rx="5.5" fill="#dadce0"/><rect x="1470" y="1001" width="41" height="16" fill="#f6f6f6" /><rect x="1490" y="1001" width="1" height="16" fill="#e3e3e3" /><rect x="1470" y="1001" width="1" height="16" fill="#e3e3e3" /><path d="M1476.5 1009 L1481 1005 V1013 Z" fill="#8a8a8a"/><path d="M1503.5 1009 L1499 1005 V1013 Z" fill="#8a8a8a"/><rect x="74" y="1017" width="1452" height="1" fill="#e1e3e1" /><rect x="74" y="1018" width="1452" height="48" fill="#f9fbfd" /><path d="M154.5 1036.5 V1048.5 M148.4 1042.5 H160.6" stroke="#262626" stroke-width="1.8" stroke-linecap="round"/><path d="M198.6 1037.5 H215.8 M198.6 1042.5 H215.8 M198.6 1047.4 H215.8" stroke="#262626" stroke-width="1.8" stroke-linecap="round"/><rect x="249.5" y="1018" width="89.5" height="48" fill="#e1e8f5" /><rect x="251" y="1062" width="86" height="4" fill="#2f7a86" /><text x="266.3" y="1049.6" font-size="17.9" fill="#0b57d0" text-anchor="start" font-weight="700" font-style="normal" font-family="'Liberation Sans', sans-serif" >Год</text><path d="M313 1040.5 H322.5 L317.75 1045.5 Z" fill="#0b57d0"/><path d="M1493 1038 L1486.5 1044.3 L1493 1050.6" fill="none" stroke="#444746" stroke-width="2"/></g><ellipse cx="1190" cy="544" rx="200.3" ry="57.3" fill="none" stroke="#fb1a0a" stroke-width="3.1" transform="rotate(0.3 1190 544)"/></svg></body></html>
